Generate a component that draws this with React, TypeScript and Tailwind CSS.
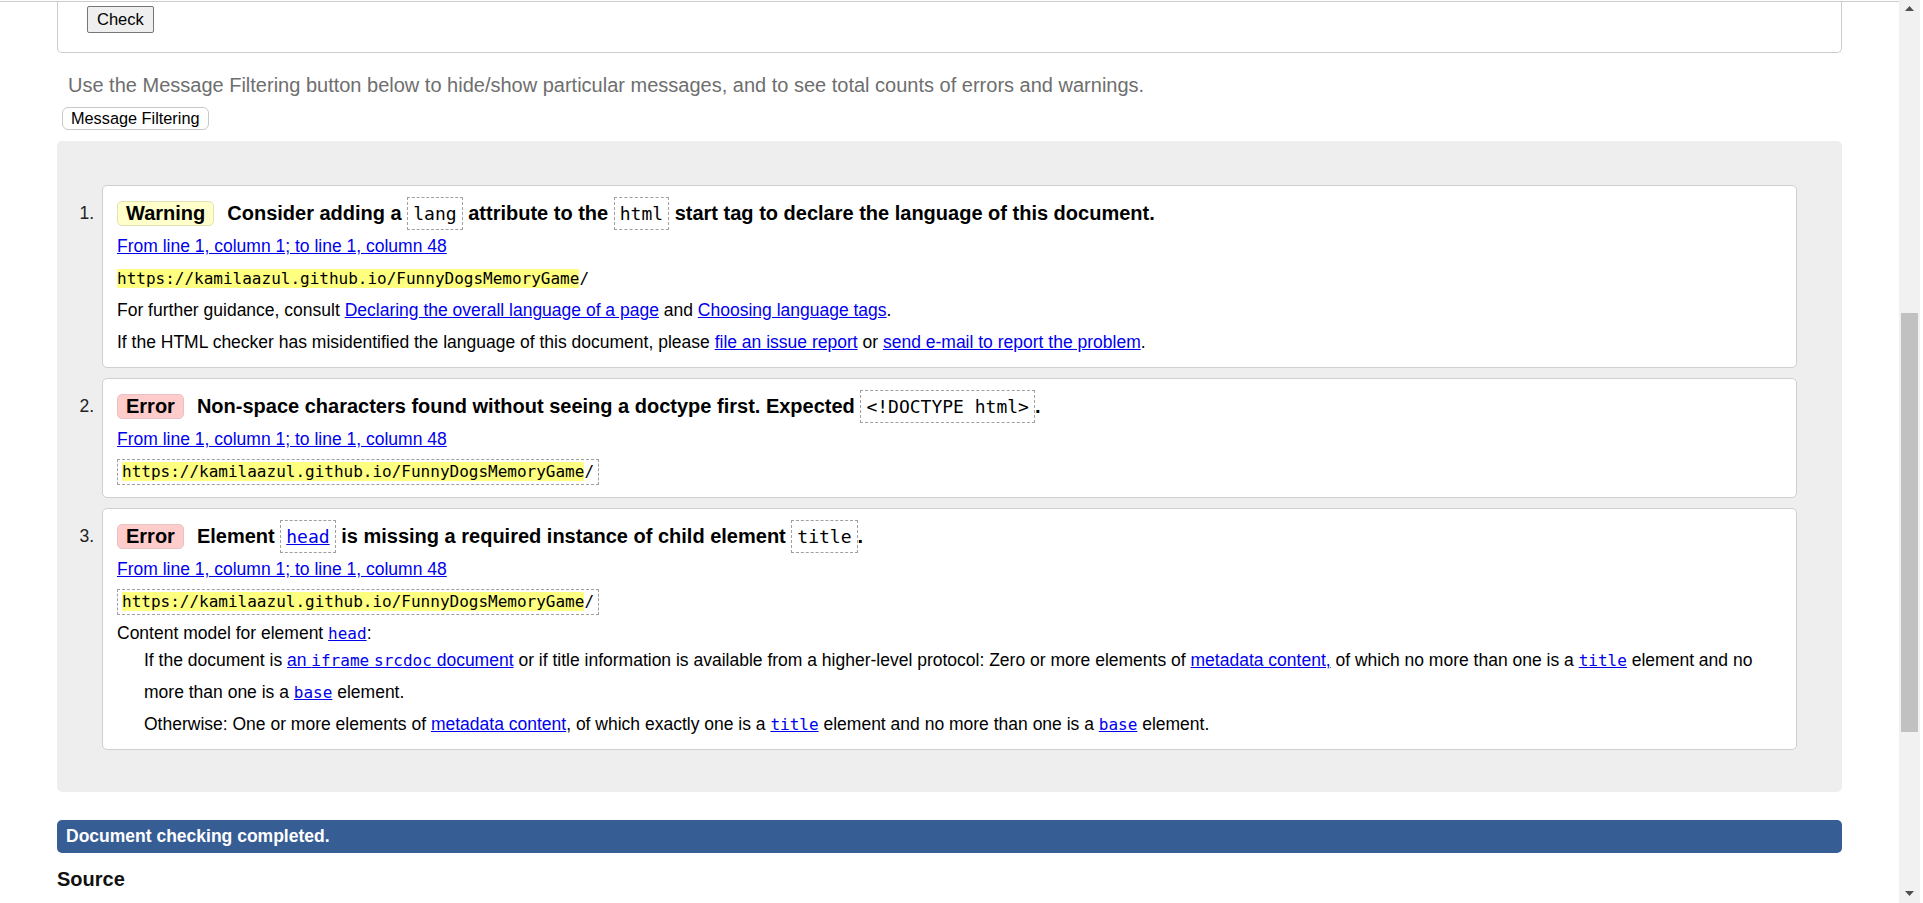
import React from 'react';

const mono = "font-['DejaVu_Sans_Mono','Liberation_Mono',monospace]";
const link = 'text-[#0000ee] underline';
const inlineMono = `${mono} text-[16px] leading-none`;

const Code: React.FC<{ children: React.ReactNode }> = ({ children }) => (
  <span
    className={`${mono} font-normal text-[18px] leading-none border border-dashed border-[#a0a0a0] px-[5px] py-[5px]`}
  >
    {children}
  </span>
);

const Url: React.FC<{ boxed?: boolean }> = ({ boxed }) => (
  <span
    className={`${mono} text-[16px] ${
      boxed ? 'inline-block leading-[24px] border border-dashed border-[#a0a0a0] px-[4px]' : 'leading-none'
    }`}
  >
    <span className="bg-[#ffff80]">https://kamilaazul.github.io/FunnyDogsMemoryGame</span>/
  </span>
);

const Badge: React.FC<{ kind: 'Warning' | 'Error' }> = ({ kind }) => (
  <span
    className={`inline-block leading-[23px] px-[8px] rounded-[5px] border mr-[13px] ${
      kind === 'Warning' ? 'bg-[#ffffcc] border-[#e2e2b4]' : 'bg-[#ffcccc] border-[#e8c2c2]'
    }`}
  >
    {kind}
  </span>
);

const Item: React.FC<{ n: number; children: React.ReactNode }> = ({ n, children }) => (
  <li className="flex">
    <span className="w-[45px] shrink-0 text-right pr-[8px] pt-[11px] leading-[34px] text-[#222]">{n}.</span>
    <div className="flex-1 bg-white border border-[#cfcfcf] rounded-[5px] pl-[14px] pr-[14px] pt-[10px] pb-[9px]">
      {children}
    </div>
  </li>
);

const Location = () => (
  <p className="leading-[32px]">
    <a href="#" className={link}>From line 1, column 1; to line 1, column 48</a>
  </p>
);

const Scrollbar = () => (
  <div className="w-[21px] shrink-0 bg-[#f1f1f1] flex flex-col">
    <div className="h-[17px] flex items-center justify-center">
      <svg width="9" height="5" viewBox="0 0 9 5"><polygon points="0,5 4.5,0 9,5" fill="#505050" /></svg>
    </div>
    <div className="h-[296px]" />
    <div className="h-[419px] mx-[2px] bg-[#c1c1c1]" />
    <div className="flex-1" />
    <div className="h-[20px] flex items-center justify-center">
      <svg width="9" height="5" viewBox="0 0 9 5"><polygon points="0,0 4.5,5 9,0" fill="#505050" /></svg>
    </div>
  </div>
);

export default function App() {
  return (
    <div className="h-[903px] overflow-hidden flex bg-white text-black font-['Liberation_Sans',Arial,sans-serif]">
      <main className="flex-1 min-w-0 pt-[1px]">
        <div className="border-t border-[#cccccc] px-[57px]">
          <div className="h-[51px] border-x border-b border-[#cccccc] rounded-b-[5px] pl-[29px] pt-[4px]">
            <button className="block h-[27px] px-[9px] text-[16.5px] bg-[#efefef] border border-[#767676] rounded-[2px]">
              Check
            </button>
          </div>

          <p className="mt-[20px] ml-[11px] text-[20px] leading-[24px] text-[#6e6e6e]">
            Use the Message Filtering button below to hide/show particular messages, and to see total counts of errors
            and warnings.
          </p>
          <button className="block mt-[10px] ml-[5px] h-[23px] px-[8px] text-[16.3px] bg-white border border-[#c8c8c8] rounded-[6px] leading-none">
            Message Filtering
          </button>

          <ol className="mt-[11px] bg-[#eeeeee] rounded-[5px] pt-[44px] pb-[42px] pr-[45px] flex flex-col gap-[10px] text-[17.5px]">
            <Item n={1}>
              <p className="font-bold text-[20px] leading-[34px]">
                <Badge kind="Warning" />
                Consider adding a <Code>lang</Code> attribute to the <Code>html</Code> start tag to declare the
                language of this document.
              </p>
              <Location />
              <p className="leading-[32px]">
                <Url />
              </p>
              <p className="leading-[32px]">
                For further guidance, consult{' '}
                <a href="#" className={link}>Declaring the overall language of a page</a> and{' '}
                <a href="#" className={link}>Choosing language tags</a>.
              </p>
              <p className="leading-[32px]">
                If the HTML checker has misidentified the language of this document, please{' '}
                <a href="#" className={link}>file an issue report</a> or{' '}
                <a href="#" className={link}>send e-mail to report the problem</a>.
              </p>
            </Item>

            <Item n={2}>
              <p className="font-bold text-[20px] leading-[34px]">
                <Badge kind="Error" />
                Non-space characters found without seeing a doctype first. Expected <Code>&lt;!DOCTYPE html&gt;</Code>.
              </p>
              <Location />
              <p className="leading-[32px] pb-[1px]">
                <Url boxed />
              </p>
            </Item>

            <Item n={3}>
              <p className="font-bold text-[20px] leading-[34px]">
                <Badge kind="Error" />
                Element{' '}
                <Code>
                  <a href="#" className={link}>head</a>
                </Code>{' '}
                is missing a required instance of child element <Code>title</Code>.
              </p>
              <Location />
              <p className="leading-[32px]">
                <Url boxed />
              </p>
              <dl>
                <dt className="mt-[5px] leading-[22px]">
                  Content model for element <a href="#" className={`${link} ${inlineMono}`}>head</a>:
                </dt>
                <dd className="ml-[27px] leading-[32px]">
                  If the document is{' '}
                  <a href="#" className={link}>
                    an <span className={inlineMono}>iframe</span> <span className={inlineMono}>srcdoc</span> document
                  </a>{' '}
                  or if title information is available from a higher-level protocol: Zero or more elements of{' '}
                  <a href="#" className={link}>metadata content,</a> of which no more than one is a{' '}
                  <a href="#" className={`${link} ${inlineMono}`}>title</a> element and no more than one is a{' '}
                  <a href="#" className={`${link} ${inlineMono}`}>base</a> element.
                </dd>
                <dd className="ml-[27px] leading-[32px]">
                  Otherwise: One or more elements of <a href="#" className={link}>metadata content</a>, of which
                  exactly one is a <a href="#" className={`${link} ${inlineMono}`}>title</a> element and no more than
                  one is a <a href="#" className={`${link} ${inlineMono}`}>base</a> element.
                </dd>
              </dl>
            </Item>
          </ol>

          <div className="mt-[28px] h-[33px] bg-[#375d95] rounded-[5px] px-[9px] flex items-center text-white font-bold text-[17.5px]">
            Document checking completed.
          </div>
          <h2 className="mt-[14px] font-bold text-[20px] leading-[24px] text-[#111]">Source</h2>
        </div>
      </main>
      <Scrollbar />
      <div className="w-[3px] shrink-0" />
    </div>
  );
}
